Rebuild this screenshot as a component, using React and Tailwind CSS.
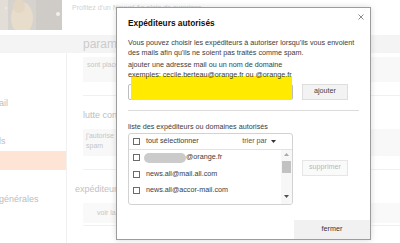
import React from 'react';

const rows = [
  { id: 1, masked: true, text: '@orange.fr' },
  { id: 2, text: 'news.all@mail.all.com' },
  { id: 3, text: 'news.all@accor-mail.com' },
  { id: 4, text: 'newsletter@orange.fr' },
];

function Box() {
  return <span className="block w-[7px] h-[7px] shrink-0 border border-[#6b6b6b] bg-white" />;
}

export default function App() {
  return (
    <div className="relative w-[400px] h-[243px] overflow-hidden bg-white font-['Liberation_Sans',Arial,sans-serif]">
      {/* faded page behind */}
      <div className="flex flex-col h-full">
        <div className="flex h-[35px]">
          <svg width="62" height="30" viewBox="0 0 62 30" className="shrink-0">
            <rect width="62" height="30" fill="#d6d2cd" />
            <rect x="0" y="0" width="8" height="30" fill="#e2ddd6" />
            <ellipse cx="22" cy="18" rx="11" ry="16" fill="#e8dccb" />
            <ellipse cx="19" cy="6" rx="6" ry="7" fill="#e3d6c3" />
            <rect x="36" y="0" width="26" height="30" fill="#cfcbc7" />
            <circle cx="58" cy="14" r="2" fill="#f2efea" />
            <circle cx="6" cy="8" r="1.5" fill="#ece6dc" />
          </svg>
          <span className="ml-[10px] mt-[4px] text-[7px] leading-[8px] text-[#d2d2d2] whitespace-nowrap">Profitez d'un Nouvel An plein de surprises</span>
        </div>
        <div className="h-[18px] bg-[#f4f4f4] pl-[83px] text-[12px] leading-[18px] text-[#cbcbcb]">paramètres</div>
        <div className="flex flex-1">
          <div className="w-[67px] shrink-0 border-r border-[#f1f1f1] flex flex-col text-[9px] leading-[12px] text-[#bdbdbd]">
            <span className="mt-[44px] -ml-[1px]">ail</span>
            <span className="mt-[26px] -ml-[1px]">ls</span>
            <div className="mt-[4px] h-[19px] bg-[#fde4d4]" />
            <span className="mt-[23px] -ml-[1px]">générales</span>
          </div>
          <div className="flex-1 pl-[16px] flex flex-col text-[#c6c6c6]">
            <div className="mt-[4px] h-[25px] bg-[#f8f8f8] pl-[4px] pt-[3px] text-[7px] leading-[9px]">sont placés dans le dossier spam</div>
            <div className="mt-[13px] h-px bg-[#f0f0f0]" />
            <span className="mt-[13px] text-[9px] leading-[12px] text-[#bdbdbd]">lutte contre le spam</span>
            <div className="mt-[8px] h-[27px] bg-[#f8f8f8] pl-[3px] pt-[2px] text-[7px] leading-[10px]">j'autorise<br />spam</div>
            <div className="mt-[13px] h-px bg-[#f0f0f0]" />
            <span className="mt-[13px] -ml-[8px] text-[9px] leading-[12px] text-[#c2c2c2]">expéditeurs autorisés</span>
            <div className="mt-[8px] h-[20px] bg-[#f9f9f9] pl-[14px] text-[7px] leading-[20px]">voir la liste</div>
            <div className="mt-[2px] h-px bg-[#f0f0f0]" />
          </div>
        </div>
      </div>

      {/* modal */}
      <div className="absolute left-[116px] top-[7px] w-[255px] h-[233px] bg-white border border-[#9c9c9c] shadow-[0_0_6px_rgba(0,0,0,0.15)] flex flex-col text-[#3c3c3c]">
        <svg width="6" height="6" viewBox="0 0 6 6" className="absolute right-[6px] top-[6px]">
          <path d="M0.5 0.5 L5.5 5.5 M5.5 0.5 L0.5 5.5" stroke="#8a8a8a" strokeWidth="1" />
        </svg>
        <div className="px-[11px] flex flex-col">
          <h1 className="mt-[9px] text-[8.3px] leading-[12px] font-bold text-[#111]">Expéditeurs autorisés</h1>
          <p className="mt-[8.5px] text-[7.2px] leading-[10px] whitespace-nowrap">
            Vous pouvez choisir les expéditeurs à autoriser lorsqu'ils vous envoient<br />
            des mails afin qu'ils ne soient pas traités comme spam.
          </p>
          <p className="mt-[2px] text-[7.2px] leading-[10px]">ajouter une adresse mail ou un nom de domaine</p>
          <p className="relative z-10 text-[7.2px] leading-[10px]">exemples: cecile.berteau@orange.fr ou @orange.fr</p>
          <div className="relative mt-[4px] flex items-center gap-[9px]">
            <div className="w-[165px] h-[16px] rounded-[2px] border border-[#bdbdbd] bg-white" />
            <button className="w-[46px] h-[16px] bg-[#f3f3f3] border border-[#dedede] text-[7.2px] text-[#444]">ajouter</button>
            <div className="absolute left-[3px] -top-[8px] w-[161px] h-[24px] bg-[#ffea00]" />
          </div>
          <div className="mt-[10px] h-px bg-[#dcdcdc]" />
          <p className="mt-[11px] text-[7.2px] leading-[10px]">liste des expéditeurs ou domaines autorisés</p>
          <div className="mt-[1px] flex items-start gap-[9px]">
            <div className="w-[165px] h-[72px] rounded-[3px] border border-[#d2d2d2] overflow-hidden flex flex-col">
              <div className="h-[16px] shrink-0 border-b border-[#e2e2e2] flex items-center pl-[4px] pr-[16px] text-[7.2px]">
                <Box />
                <span className="ml-[6px]">tout sélectionner</span>
                <span className="ml-auto text-[#555]">trier par</span>
                <svg width="5" height="3" viewBox="0 0 5 3" className="ml-[4px]">
                  <path d="M0 0 L5 0 L2.5 3 Z" fill="#333" />
                </svg>
              </div>
              <div className="flex flex-1 overflow-hidden">
                <div className="flex-1 flex flex-col overflow-hidden">
                  {rows.map((r) => (
                    <div key={r.id} className="h-[16.5px] shrink-0 flex items-center pl-[4px] text-[7.2px] whitespace-nowrap">
                      <Box />
                      {r.masked ? (
                        <>
                          <span className="ml-[4px] w-[42px] h-[10px] rounded-full bg-[#cbcbcb]" />
                          <span>{r.text}</span>
                        </>
                      ) : (
                        <span className="ml-[6px]">{r.text}</span>
                      )}
                    </div>
                  ))}
                </div>
                <div className="w-[11px] shrink-0 flex flex-col items-center bg-[#f7f7f7]">
                  <svg width="5" height="3" viewBox="0 0 5 3" className="mt-[3px]">
                    <path d="M0 3 L5 3 L2.5 0 Z" fill="#a8a8a8" />
                  </svg>
                  <div className="mt-[5px] w-[9px] h-[12px] bg-[#c2c2c2]" />
                  <svg width="5" height="3" viewBox="0 0 5 3" className="mt-auto mb-[6px]">
                    <path d="M0 0 L5 0 L2.5 3 Z" fill="#505050" />
                  </svg>
                </div>
              </div>
            </div>
            <button className="mt-[27px] w-[46px] h-[16px] bg-[#fafafa] border border-[#e6e6e6] text-[7.2px] text-[#b8b8b8]">supprimer</button>
          </div>
        </div>
        <button className="mt-auto self-end w-[76px] h-[19px] bg-[#f1f1f1] text-[7.2px] text-[#333]">fermer</button>
      </div>
    </div>
  );
}
